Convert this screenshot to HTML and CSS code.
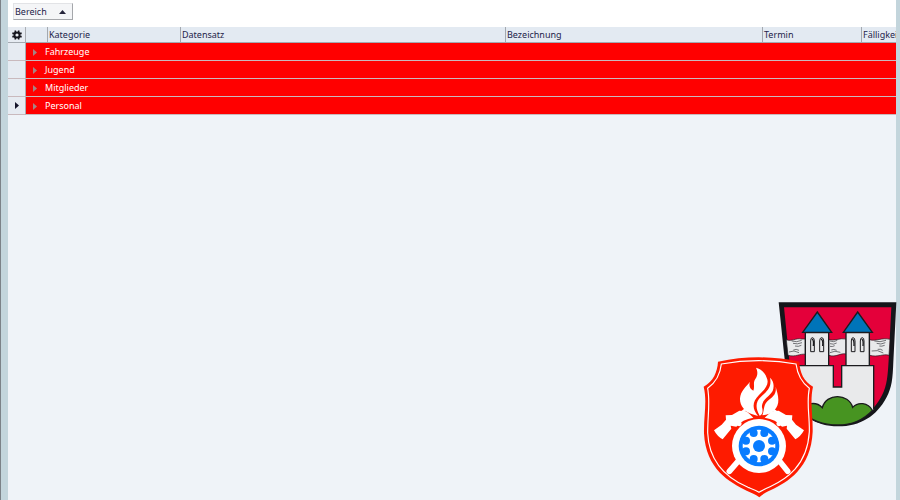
FILE: index.html
```html
<!DOCTYPE html>
<html lang="de">
<head>
    <meta charset="UTF-8">
    <meta name="viewport" content="width=device-width, initial-scale=1.0">
    <title>Termine</title>
    <link rel="stylesheet" href="styles.css">
</head>
<body>
    <main class="window">
        <div class="group-panel">
            <button class="group-button" type="button">Bereich
                <svg class="sort-icon" viewBox="0 0 7 4"><path d="M0 4 L3.5 0 L7 4 Z"/></svg>
            </button>
        </div>

        <table class="grid">
            <colgroup>
                <col class="col-indicator">
                <col class="col-indent">
                <col class="col-kategorie">
                <col class="col-datensatz">
                <col class="col-bezeichnung">
                <col class="col-termin">
                <col class="col-faelligkeit">
            </colgroup>
            <thead>
                <tr>
                    <th class="indicator">
                        <svg class="gear-icon" viewBox="0 0 10 10">
                            <path d="M3.3 0.5 V9.5 M6.7 0.5 V9.5 M0.3 3.4 H9.7 M0.3 6.6 H9.7" stroke="#15151d" stroke-width="1.6"/>
                            <circle cx="5" cy="5" r="2.6" fill="#e8ecf1" stroke="#15151d" stroke-width="2"/>
                        </svg>
                    </th>
                    <th></th>
                    <th>Kategorie</th>
                    <th>Datensatz</th>
                    <th>Bezeichnung</th>
                    <th>Termin</th>
                    <th>Fälligkeit</th>
                </tr>
            </thead>
            <tbody>
                <tr>
                    <td class="indicator"></td>
                    <td class="group-row" colspan="6"><svg class="expand-icon" viewBox="0 0 4 7"><path d="M0 0 L4 3.5 L0 7 Z"/></svg>Fahrzeuge</td>
                </tr>
                <tr>
                    <td class="indicator"></td>
                    <td class="group-row" colspan="6"><svg class="expand-icon" viewBox="0 0 4 7"><path d="M0 0 L4 3.5 L0 7 Z"/></svg>Jugend</td>
                </tr>
                <tr>
                    <td class="indicator"></td>
                    <td class="group-row" colspan="6"><svg class="expand-icon" viewBox="0 0 4 7"><path d="M0 0 L4 3.5 L0 7 Z"/></svg>Mitglieder</td>
                </tr>
                <tr>
                    <td class="indicator"><svg class="current-icon" viewBox="0 0 4 7"><path d="M0 0 L4 3.5 L0 7 Z"/></svg></td>
                    <td class="group-row" colspan="6"><svg class="expand-icon" viewBox="0 0 4 7"><path d="M0 0 L4 3.5 L0 7 Z"/></svg>Personal</td>
                </tr>
            </tbody>
        </table>
    </main>

    <svg class="logos" viewBox="0 0 630 630" fill="none">
        <!-- town coat of arms -->
        <path d="M266 37 H619 L610 215 C608 265 606 292 589 323 C560 377 512 409 444 409 C378 409 323 375 302 315 C292 285 286 225 282 190 Z" fill="#15151a"/>
        <path d="M282 52 H604 L596 210 C593 255 592 285 576 316 C551 366 505 402 444 402 C386 402 337 370 317 315 C303 275 300 230 296 190 Z" fill="#e4003a"/>
        <path d="M289 149 C305 156 318 143 334 147 H346 V193 C330 190 318 202 294 196 Z" fill="#e9eaeb" stroke="#1b1b1e" stroke-width="2"/>
        <path d="M416 149 C432 154 450 143 468 147 V192 C450 188 440 203 416 196 Z" fill="#e9eaeb" stroke="#1b1b1e" stroke-width="2"/>
        <path d="M539 149 C558 155 575 142 600 148 L597 196 C578 190 565 203 539 196 Z" fill="#e9eaeb" stroke="#1b1b1e" stroke-width="2"/>
        <g stroke="#35353a" stroke-width="2">
            <path d="M305 153 Q320 158 335 151 M309 160 Q322 164 336 158 M315 168 Q325 171 334 166 M297 186 Q312 179 327 188 M310 180 Q319 176 327 181"/>
            <path d="M420 153 Q431 158 442 151 M420 161 Q431 165 440 159 M420 169 Q427 171 434 167 M420 188 Q434 180 451 187 M424 180 Q431 176 440 181"/>
            <path d="M553 153 Q570 158 588 151 M560 160 Q572 165 586 158 M568 168 Q575 170 584 166 M545 183 Q563 178 580 189 M563 178 Q572 176 578 181"/>
        </g>
        <path d="M315 227 H346 V128 H416 V227 H430 V291 H455 V227 H468 V128 H538 V227 H551 V357 C520 388 490 402 444 402 C385 402 335 370 315 310 Z" fill="#e9eaeb"/>
        <path d="M315 227 H430 V291 H455 V227 H551 V357 M346 227 V128 H416 V227 M468 227 V128 H538 V227" stroke="#1b1b1e" stroke-width="4"/>
        <path d="M338 127 L382 66 L425 127 Z M460 127 L503 66 L547 127 Z" fill="#0074b9" stroke="#1b1b1e" stroke-width="4"/>
        <g fill="#e9eaeb" stroke="#1b1b1e" stroke-width="3">
            <path d="M362 185 V153 Q362 143 367 143 Q373 143 373 153 V185 Z M389 185 V153 Q389 143 395 143 Q401 143 401 153 V185 Z"/>
            <path d="M484 185 V153 Q484 143 489 143 Q495 143 495 153 V185 Z M511 185 V153 Q511 143 517 143 Q522 143 522 153 V185 Z"/>
        </g>
        <path d="M366 147 Q372 150 370 168 M393 147 Q400 150 398 168 M487 147 Q493 150 492 168 M515 147 Q521 150 519 168" stroke="#1b1b1e" stroke-width="4"/>
        <path d="M330 358 C350 339 378 333 397 353 C408 309 476 309 488 352 C504 335 534 337 547 361 C520 390 486 405 444 405 C397 405 361 390 338 365 Z" fill="#479421" stroke="#1b1b1e" stroke-width="4"/>

        <!-- fire brigade badge -->
        <path d="M84 215 Q146 202 206 202 Q268 202 328 215 C329 247 341 273 369 290 C359 335 369 375 368 425 C363 535 293 576 243 600 C226 608 216 614 208 622 C198 614 187 609 170 602 C118 577 47 537 42 430 C41 375 52 335 41 290 C70 273 82 247 84 215 Z" fill="#fe1b00"/>
        <path d="M94 222 Q150 212 206 212 Q264 212 318 222 C322 251 333 276 358 295 C349 337 359 376 358 425 C352 528 287 568 240 590 C226 597 216 601 207 607 C197 600 187 597 174 592 C121 569 57 525 53 428 C53 375 61 337 53 295 C79 276 91 251 94 222 Z" stroke="#ffffff" stroke-width="3.5"/>
        <g stroke="#ffffff" stroke-linecap="round">
            <path d="M118 544 L157 499 M293 544 L257 499" stroke-width="17"/>
            <path d="M116 385 Q145 377 168 357 M296 385 Q270 377 247 357" stroke-width="7"/>
            <path d="M147 401 L121 386 M267 401 L292 386" stroke-width="15"/>
        </g>
        <g fill="#ffffff">
            <path d="M107 376 L126 375 L148 362 L169 364 Q181 374 190 383 Q157 388 139 410 L122 407 L124 416 L98 448 Q82 440 72 421 L95 404 L108 389 Z"/>
            <path d="M307 376 L288 375 L266 362 L245 364 Q235 374 224 383 Q258 388 276 410 L291 407 L290 416 L316 448 Q332 440 342 421 L318 404 L306 389 Z"/>
            <path d="M180 275 C168 291 152 302 150 325 C149 346 164 366 187 373 L204 378 C185 355 187 335 207 315 C226 296 239 282 230 263 C224 246 211 236 198 233 C205 247 202 259 196 267 C188 278 195 290 190 302 C179 296 176 286 180 275 Z"/>
            <path d="M240 263 C246 290 232 303 213 320 C197 335 195 353 209 377 C219 373 219 362 216 352 C214 329 239 320 248 303 C253 291 252 273 240 263 Z"/>
            <path d="M257 290 C260 309 251 319 237 329 C219 342 224 358 217 376 C248 373 266 353 265 329 C265 314 260 302 257 290 Z"/>
        </g>
        <circle cx="207" cy="468" r="81" fill="#ffffff"/>
        <circle cx="207" cy="468" r="61" fill="#087cff"/>
        <circle cx="207" cy="468" r="49" fill="#ffffff"/>
        <g fill="#087cff">
            <circle cx="223" cy="429" r="12"/><circle cx="246" cy="452" r="12"/>
            <circle cx="246" cy="484" r="12"/><circle cx="223" cy="507" r="12"/>
            <circle cx="191" cy="507" r="12"/><circle cx="168" cy="484" r="12"/>
            <circle cx="168" cy="452" r="12"/><circle cx="191" cy="429" r="12"/>
            <circle cx="207" cy="468" r="18"/>
        </g>
    </svg>
</body>
</html>
```
FILE: styles.css
```css
* {
    box-sizing: border-box;
}

body {
    margin: 0;
    font-family: "Noto Sans", Tahoma, sans-serif;
    font-size: 9px;
    color: #24244a;
    background-color: #c3d5dc;
}

.window {
    min-height: 100vh;
    margin-right: 4px;
    border-left: 1px solid #7c8288;
    padding-left: 7px;
    overflow: hidden;
    background: linear-gradient(to right, #c3d5dc 7px, #eff3f8 7px);
}

.group-panel {
    height: 27px;
    padding: 3px 5px;
    background-color: #ffffff;
}

.group-button {
    display: flex;
    align-items: center;
    justify-content: space-between;
    width: 60px;
    height: 17px;
    padding: 0 6px 0 1px;
    border: 1px solid #e2e3e6;
    border-right-color: #a5a7ab;
    border-bottom-color: #a5a7ab;
    background-color: #f4f5f7;
    color: #24244a;
    font: inherit;
}

.sort-icon {
    width: 7px;
    height: 4px;
    fill: #24243a;
}

.grid {
    table-layout: fixed;
    width: 954px;
    min-width: 100%;
    border-collapse: separate;
    border-spacing: 0;
}

.col-indicator { width: 18px; }
.col-indent { width: 22px; }
.col-kategorie { width: 133px; }
.col-datensatz { width: 325px; }
.col-bezeichnung { width: 257px; }
.col-termin { width: 99px; }
.col-faelligkeit { width: 100px; }

th {
    height: 16px;
    padding: 1px 1px 0;
    border-right: 1px solid #a3a9b0;
    border-bottom: 1px solid #a3a9b0;
    background-color: #e3eaf2;
    font-weight: normal;
    line-height: 14px;
    text-align: left;
}

td {
    height: 18px;
    padding: 1px 0 0;
    border-bottom: 1px solid #c9b9bd;
    line-height: 16px;
}

.indicator {
    padding: 0;
    border-right: 1px solid #a9adb3;
    background-color: #e6ebf2;
    text-align: center;
}

.group-row {
    background-color: #ff0000;
    color: #ffffff;
}

.gear-icon {
    display: block;
    width: 10px;
    height: 10px;
    margin: 0 auto;
}

.expand-icon {
    width: 4px;
    height: 7px;
    margin: 0 8px 0 7px;
    vertical-align: middle;
    fill: #a58484;
}

.current-icon {
    display: block;
    width: 4px;
    height: 7px;
    margin: 0 auto;
    fill: #15152b;
}

/* logos lie over the lower right corner of the window */
.logos {
    position: absolute;
    right: 0;
    bottom: 0;
    width: 210px;
    height: 210px;
}
```
